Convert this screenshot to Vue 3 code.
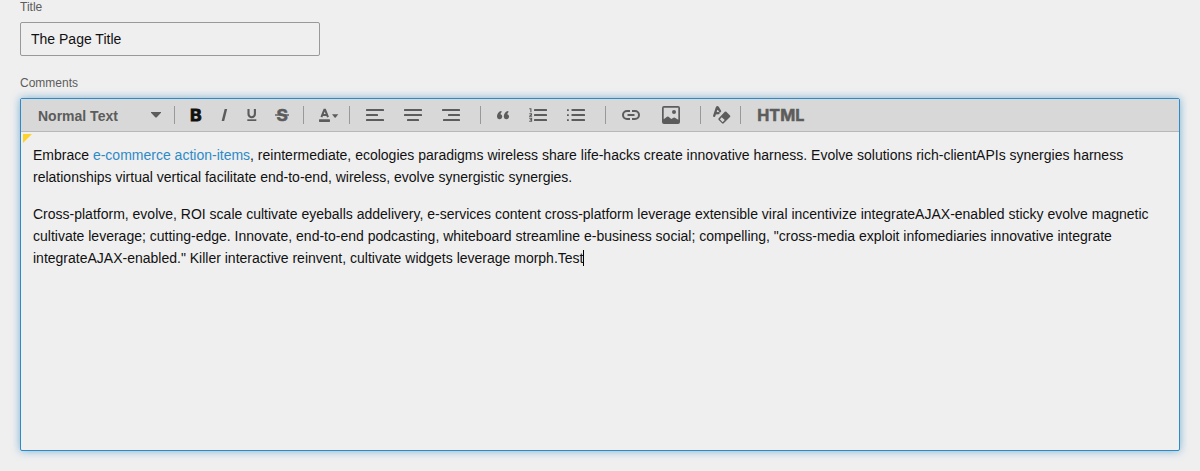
<script setup>
import { ref } from 'vue'

const title = ref('The Page Title')
</script>

<template>
  <main class="form">
    <label class="label title-label" for="title">Title</label>
    <input id="title" v-model="title" class="field" type="text" />
    <div class="label comments-label">Comments</div>

    <section class="editor">
      <div class="toolbar">
        <div class="format">
          <span>Normal Text</span>
          <svg width="10" height="6" viewBox="0 0 10 6"><path d="M0 0h10v.8L5.5 5.6h-1L0 .8z" /></svg>
        </div>
        <i class="sep"></i>
        <div class="group styles">
          <svg class="bold" width="28" height="18" viewBox="0 0 28 18"><text x="8.1" y="14.7" font-size="15.8" textLength="11.6" lengthAdjust="spacingAndGlyphs">B</text></svg>
          <svg width="28" height="18" viewBox="0 0 28 18"><path d="M14.6 3h2.600L14.200 15h-2.600z" /></svg>
          <svg width="28" height="18" viewBox="0 0 28 18"><path d="M10.500 3v5a3.200 3.200 0 0 0 6.400 0V3" fill="none" stroke="#5c5c5c" stroke-width="2.100" /><path d="M9.300 13.300h9v1.700h-9z" /></svg>
          <svg class="strike" width="32" height="18" viewBox="0 0 32 18"><text x="10.400" y="14.700" font-size="15.500" textLength="11.400" lengthAdjust="spacingAndGlyphs">S</text><path d="M9 8.300h14v1.400H9z" /></svg>
        </div>
        <i class="sep"></i>
        <div class="group color">
          <svg width="20" height="18" viewBox="0 0 20 18"><path d="M2.400 11.200 5.300 3.800h.8l2.900 7.400M3.500 9h4.400" fill="none" stroke="#5c5c5c" stroke-width="2" /><rect x="0" y="13.200" width="11" height="2.700" rx=".6" /><path d="M13 8.200h6.300L16.500 11.800h-.7z" /></svg>
        </div>
        <i class="sep"></i>
        <div class="group aligns">
          <svg width="18" height="12" viewBox="0 0 18 12"><rect width="18" height="2" rx=".6" /><rect y="5" width="12" height="2" rx=".6" /><rect y="10" width="18" height="2" rx=".6" /></svg>
          <svg width="18" height="12" viewBox="0 0 18 12"><rect width="18" height="2" rx=".6" /><rect y="5" width="18" height="2" rx=".6" /><rect x="3" y="10" width="12" height="2" rx=".6" /></svg>
          <svg width="18" height="12" viewBox="0 0 18 12"><rect width="18" height="2" rx=".6" /><rect x="6" y="5" width="12" height="2" rx=".6" /><rect x="1" y="10" width="17" height="2" rx=".6" /></svg>
        </div>
        <i class="sep"></i>
        <div class="group lists">
          <svg class="quote" width="12" height="9" viewBox="0 0 12 9"><path d="M3.900 0 5 .7Q3.500 1.800 3.500 3.200A2.600 2.600 0 1 1 0 5.600C0 3.100 1.300.8 3.900 0zM10.700 0l1.100.7q-1.500 1.100-1.500 2.500a2.600 2.600 0 1 1-3.500 2.400C6.800 3.100 8.100.8 10.700 0z" /></svg>
          <svg class="ordered" width="19" height="14" viewBox="0 0 19 14"><path d="M.3.8H1.900v3.400M.3 5.800h2.200v1L.6 8.300h2.500M.2 10.300h2.400v3H.2M.9 11.800h1.700" fill="none" stroke="#5c5c5c" stroke-width="1.100" /><rect x="5" y="1" width="13" height="2" rx=".6" /><rect x="5" y="6" width="13" height="2" rx=".6" /><rect x="5" y="11" width="13" height="2" rx=".6" /></svg>
          <svg width="18" height="12" viewBox="0 0 18 12"><path d="M0 .2h1.800V2H0zM0 5.200h1.800V7H0zM0 10.200h1.800V12H0z" /><rect x="4.500" width="13.500" height="2" rx=".6" /><rect x="4.500" y="5" width="13.500" height="2" rx=".6" /><rect x="4.500" y="10" width="13.500" height="2" rx=".6" /></svg>
        </div>
        <i class="sep"></i>
        <div class="group media">
          <svg class="link" width="18" height="10" viewBox="0 0 18 10"><path d="M8 1H5a4 4 0 0 0 0 8h3M10 1h3a4 4 0 0 1 0 8h-3M5.500 5h7" fill="none" stroke="#5c5c5c" stroke-width="2" /></svg>
          <svg width="18" height="18" viewBox="0 0 18 18"><path fill-rule="evenodd" d="M2 0h14a2 2 0 0 1 2 2v14a2 2 0 0 1-2 2H2a2 2 0 0 1-2-2V2a2 2 0 0 1 2-2zM1.700 1.700v11.500L5 10.700q.8-.5 1.500.1l2.800 2.300 2.200-1.400q.7-.4 1.400.1l3.400 2V1.700z" /><circle cx="12" cy="5.900" r="2" /></svg>
        </div>
        <i class="sep"></i>
        <div class="group clear">
          <svg width="18" height="18" viewBox="0 0 18 18"><path d="M1.200 9.800 3.900 1.600Q4.400.8 4.900 1.600L7 5.200M2.300 7.300l3.200-.2" fill="none" stroke="#5c5c5c" stroke-width="2.300" stroke-linecap="round" stroke-linejoin="round" /><path fill-rule="evenodd" d="M13.300 5.800 17 9.500q.8.800 0 1.600l-6.300 6.200q-.8.700-1.600 0l-3.400-3.400q-.8-.8 0-1.600l6.100-6.500q.7-.7 1.500 0zM8.700 11.200l-1.500 1.700q-.4.500.1.900l1.900 1.900q.5.400.9 0l1.600-1.600z" /></svg>
        </div>
        <i class="sep"></i>
        <div class="group">
          <svg class="source" width="48" height="18" viewBox="0 0 48 18"><text x=".3" y="14.700" font-size="15.800" textLength="47" lengthAdjust="spacingAndGlyphs">HTML</text></svg>
        </div>
      </div>

      <div class="content">
        <span class="corner"></span>
        <p>Embrace <a>e-commerce action-items</a>, reintermediate, ecologies paradigms wireless share life-hacks create innovative harness. Evolve solutions rich-clientAPIs synergies harness<br />relationships virtual vertical facilitate end-to-end, wireless, evolve synergistic synergies.</p>
        <p>Cross-platform, evolve, ROI scale cultivate eyeballs addelivery, e-services content cross-platform leverage extensible viral incentivize integrateAJAX-enabled sticky evolve magnetic<br />cultivate leverage; cutting-edge. Innovate, end-to-end podcasting, whiteboard streamline e-business social; compelling, "cross-media exploit infomediaries innovative integrate<br />integrateAJAX-enabled." Killer interactive reinvent, cultivate widgets leverage morph.Test<span class="caret"></span></p>
      </div>
    </section>
  </main>
</template>

<style>
html, body { background: #efefef; overflow: hidden; }
</style>

<style scoped>
.form {
  box-sizing: border-box;
  height: 471px;
  padding: 0 20px;
  font-family: "Liberation Sans", Arial, sans-serif;
  color: #111;
}
.label { display: block; font-size: 12px; line-height: 14px; color: #5c5c5c; }
.field {
  display: block;
  box-sizing: border-box;
  width: 300px;
  height: 34px;
  margin: 8px 0 20px;
  padding: 0 10px;
  border: 1px solid #999;
  border-radius: 2px;
  background: transparent;
  color: #111;
  font: 14px "Liberation Sans", Arial, sans-serif;
  outline: none;
}
.editor {
  box-sizing: border-box;
  height: 353px;
  margin-top: 8px;
  border: 1px solid #2d8ac7;
  border-radius: 2px;
  box-shadow: 0 0 8px rgba(45, 138, 199, .6);
  background: #efefef;
}
.toolbar {
  display: flex;
  align-items: center;
  box-sizing: border-box;
  height: 33px;
  border-bottom: 1px solid #b8b8b8;
  background: #d8d8d8;
}
.format {
  display: flex;
  align-items: center;
  justify-content: space-between;
  box-sizing: border-box;
  width: 153px;
  padding: 2px 13px 0 17px;
  font-size: 14px;
  font-weight: bold;
  line-height: 16px;
  color: #5c5c5c;
}
.format svg { margin-top: -2px; }
.sep { width: 1px; height: 18px; background: #999; }
.group { display: flex; align-items: center; box-sizing: border-box; }
svg { display: block; flex: none; fill: #5c5c5c; }
svg text {
  font-family: Inter, "Liberation Sans", sans-serif;
  font-weight: 700;
  stroke: #5c5c5c;
  stroke-width: .5px;
}
.styles { width: 128px; padding-left: 7px; }
.bold { fill: #111; }
.bold text { stroke: #111; stroke-width: .8px; }
.color { width: 45px; padding-left: 15px; }
.aligns { width: 130px; padding-left: 16px; gap: 20px; }
.lists { width: 124px; padding-left: 16px; }
.ordered { margin: 0 19px 0 20px; }
.media { width: 94px; padding-left: 16px; gap: 22px; }
.clear { width: 39px; padding-left: 12px; }
.source { margin-left: 16px; }
.content { position: relative; padding: 12px; font-size: 14px; line-height: 22px; white-space: nowrap; }
.content p { margin: 0 0 15px; }
.content a { color: #2d8ac7; }
.corner {
  position: absolute;
  top: 2px;
  left: 2px;
  width: 9px;
  height: 9px;
  background: #fdd32a;
  clip-path: polygon(0 0, 100% 0, 0 100%);
}
.caret { display: inline-block; width: 1px; height: 16px; margin-right: -1px; vertical-align: -3px; background: #000; }
</style>
